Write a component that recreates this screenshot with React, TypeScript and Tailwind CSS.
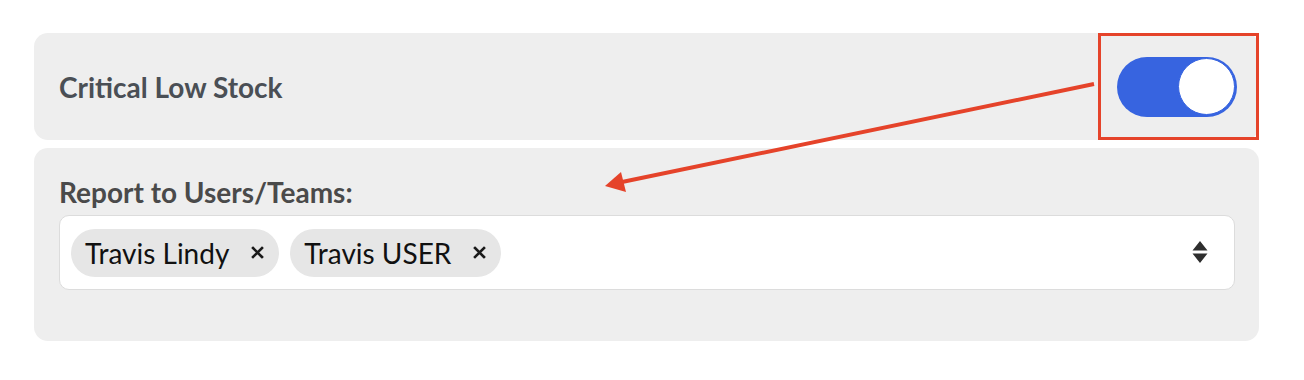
const Chip = ({ name }: { name: string }) => {
  return (
    <div className="flex items-center h-[48px] rounded-full bg-[#e6e6e6] pl-[14px] pr-[15px]">
      <span className="text-[28px] leading-none text-[#111111]">{name}</span>
      <svg width="13" height="13" viewBox="0 0 13 13" className="ml-[22px]">
        <path d="M2 2 L11 11 M11 2 L2 11" stroke="#1a1a1a" strokeWidth="2.6" strokeLinecap="square" />
      </svg>
    </div>
  )
}

const App = () => {
  return (
    <div className="relative w-[1304px] h-[380px] bg-white pt-[33px] pl-[34px] font-['Lato','Liberation_Sans',sans-serif]">
      <div className="w-[1225px] flex flex-col gap-[8px]">
        {/* TOGGLE CARD */}
        <div className="h-[107px] rounded-[14px] bg-[#eeeeee] flex items-center justify-between pl-[25px]">
          <span className="text-[28px] font-bold text-[#4a4f55] leading-none">Critical Low Stock</span>
          <div className="w-[161px] h-full border-[3px] border-[#e5432a] flex items-center pl-[16px]">
            <div className="w-[120px] h-[60px] rounded-full bg-[#3764e0] flex items-center justify-end pr-[2px]">
              <div className="w-[57px] h-[57px] rounded-full bg-white border border-[#3764e0]" />
            </div>
          </div>
        </div>
        {/* USERS CARD */}
        <div className="h-[193px] rounded-[14px] bg-[#eeeeee] pt-[30px] pl-[25px] pr-[24px]">
          <div className="text-[28px] font-bold text-[#4a4a4a] leading-none">Report to Users/Teams:</div>
          <div className="mt-[9px] h-[75px] bg-white border border-[#dcdcdc] rounded-[10px] flex items-center pl-[11px] gap-[11px]">
            <Chip name="Travis Lindy" />
            <Chip name="Travis USER" />
            <svg width="16" height="23" viewBox="0 0 16 23" className="ml-auto mr-[26px]">
              <path d="M8 0 L15.5 9.5 L0.5 9.5 Z M0.5 12.5 L15.5 12.5 L8 22 Z" fill="#2e2e2e" />
            </svg>
          </div>
        </div>
      </div>
      {/* ARROW */}
      <svg className="absolute inset-0 pointer-events-none" width="1304" height="380">
        <line x1="1094" y1="84" x2="622" y2="182" stroke="#e5432a" strokeWidth="4" />
        <path d="M605 186 L621 172 L626 192 Z" fill="#e5432a" />
      </svg>
    </div>
  )
}
export default App
